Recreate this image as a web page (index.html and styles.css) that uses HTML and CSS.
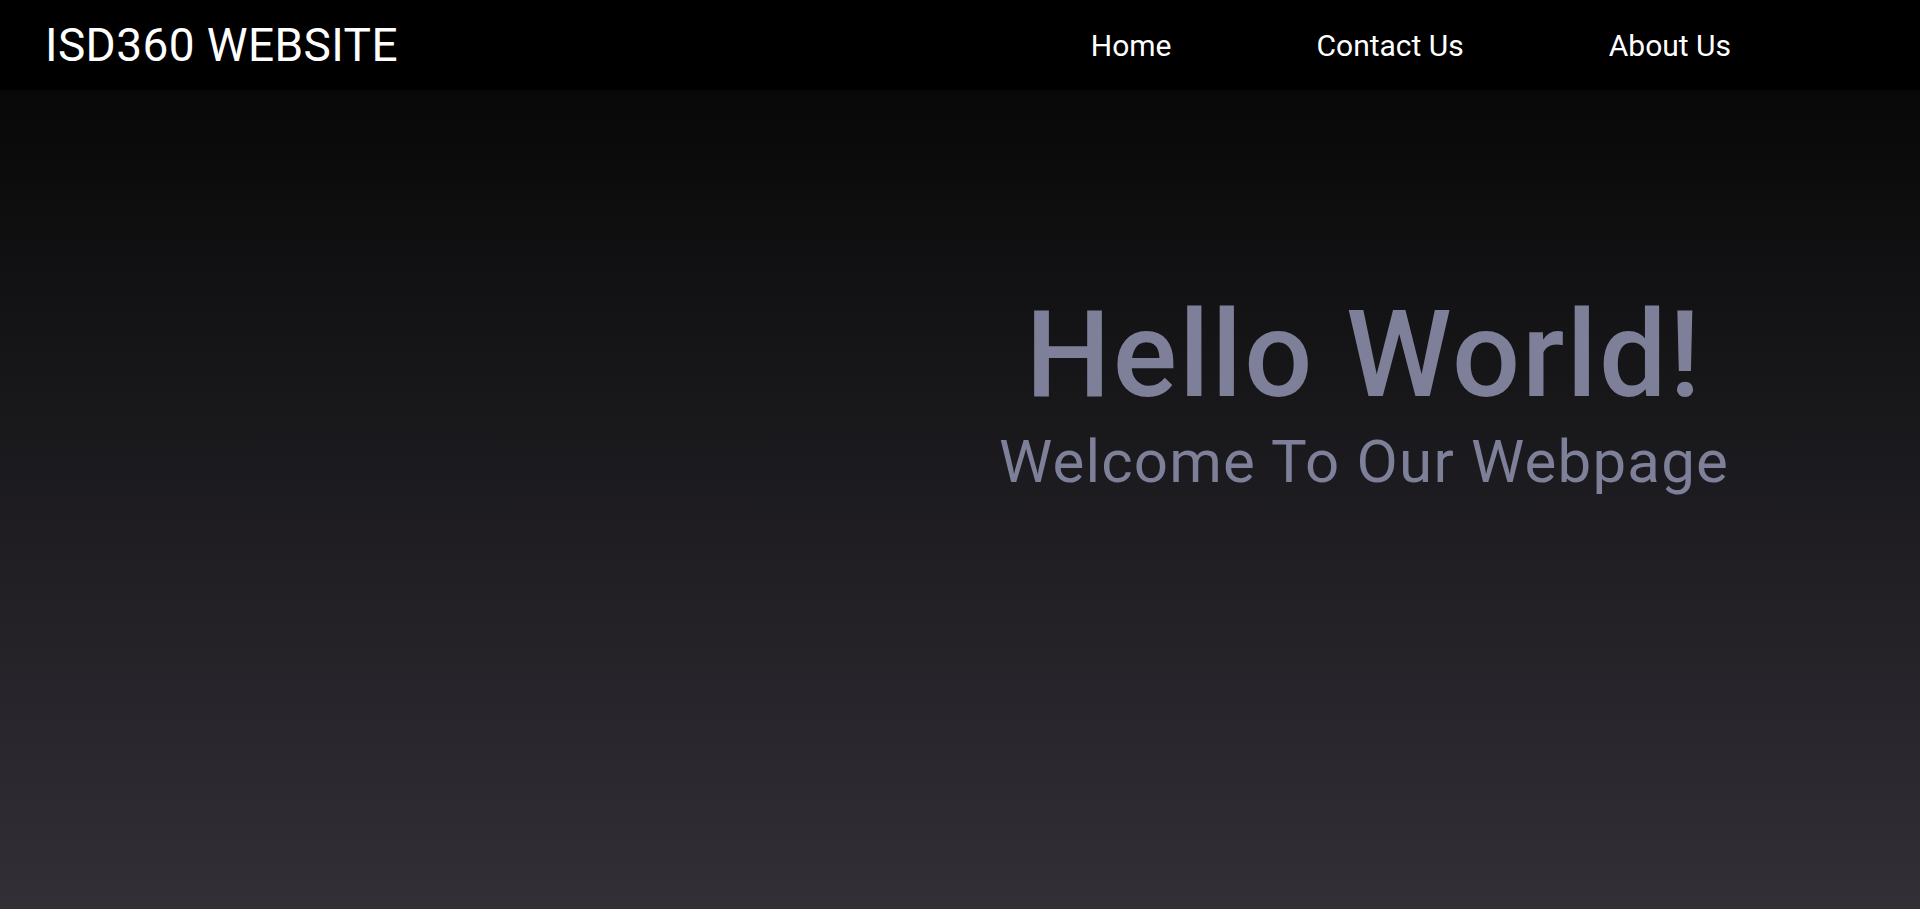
FILE: index.html
```html
<!DOCTYPE html>
<html lang="en">
<head>
<meta charset="utf-8">
<title>ISD360 Website</title>
<link rel="stylesheet" href="styles.css">
</head>
<body>
<header class="site-header">
  <div class="logo">ISD360 WEBSITE</div>
  <nav class="nav">
    <a class="nav-link" href="#">Home</a>
    <a class="nav-link" href="#">Contact Us</a>
    <a class="nav-link" href="#">About Us</a>
  </nav>
</header>
<main class="hero">
  <div class="hero-text">
    <h1 class="hero-title">Hello World!</h1>
    <h2 class="hero-subtitle">Welcome To Our Webpage</h2>
  </div>
</main>
</body>
</html>
```
FILE: styles.css
```css
html, body {
  margin: 0;
  padding: 0;
  height: 100%;
}
body {
  font-family: Roboto, "Liberation Sans", sans-serif;
  background: #000;
  display: flex;
  flex-direction: column;
  overflow: hidden;
}
.site-header {
  height: 90px;
  flex: 0 0 90px;
  background: #000;
  display: flex;
  align-items: center;
  justify-content: space-between;
  padding: 0 189px 0 45px;
}
.logo {
  color: #fff;
  font-size: 46px;
  line-height: 1;
  letter-spacing: 0.4px;
}
.nav {
  display: flex;
  align-items: center;
  gap: 145px;
  padding-top: 2px;
}
.nav-link {
  color: #fff;
  text-decoration: none;
  font-size: 30px;
  line-height: 1;
}
.hero {
  flex: 1;
  background: linear-gradient(to bottom, #080808 0%, #322f37 100%);
  display: flex;
  justify-content: flex-end;
  align-items: flex-start;
  padding: 205px 156px 0 0;
}
.hero-text {
  width: 800px;
  text-align: center;
  color: #7e7f99;
}
.hero-title {
  margin: 0;
  font-size: 120px;
  font-weight: 500;
  line-height: 1;
  letter-spacing: 2px;
}
.hero-subtitle {
  margin: 17px 0 0;
  font-size: 60px;
  font-weight: 400;
  line-height: 1;
  letter-spacing: 1.2px;
}
```
